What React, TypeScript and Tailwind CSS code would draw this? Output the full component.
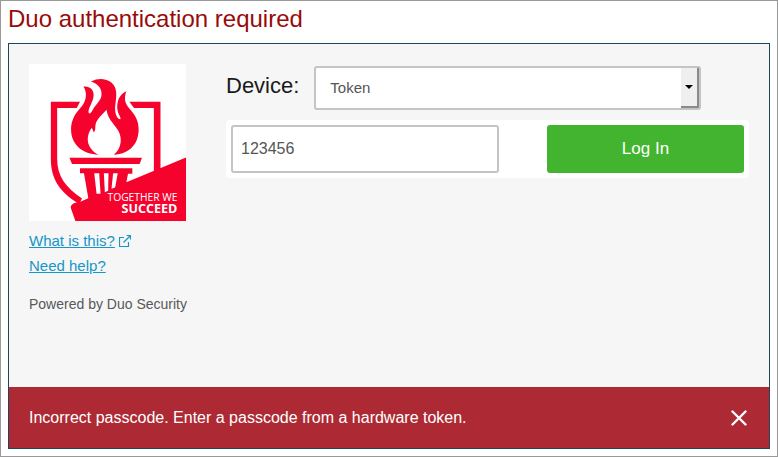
import React, { useState } from 'react';

const TorchLogo: React.FC = () => (
  <svg viewBox="24 27 474 474" className="w-full aspect-square" role="img" aria-label="Together we succeed">
    <rect x="24" y="27" width="474" height="474" fill="#fff" />
    <g fill="#f6032d">
      {/* shield */}
      <path d="M90 141 H178 L168 160 H109 V312 C109 366 134 398 184 433 L176 450 C116 414 90 374 90 314 Z" />
      <path d="M327 141 H421 V345 L401 352 V160 H341 Z" />
      {/* flame */}
      <path d="M188 95 C213 93 223 110 218 130 C214 148 202 162 204 174 C206 180 212 174 217 164 C226 148 242 138 243 120 C244 100 232 87 211 80 C241 64 276 74 285 101 C293 128 279 153 286 178 C289 188 294 194 300 194 C302 188 295 182 292 170 C287 146 294 119 318 109 C310 130 313 145 327 161 C343 179 355 196 355 224 C355 269 327 299 280 301 C298 286 306 262 298 238 C288 211 263 200 258 165 C246 179 228 193 225 210 C223 221 226 227 220 233 C216 229 217 222 213 220 C197 242 193 279 234 301 C187 300 151 271 151 225 C151 197 163 177 179 160 C198 140 201 113 188 95 Z" />
      {/* pedestal */}
      <path d="M146 310 H365 L358 329 H154 Z" />
      <path d="M178 342 H336 V358 H323 L318 384 L498 309 V501 H164 L150 461 C151 449 162 445 177 444 L203 432 L190 357 H178 Z" />
    </g>
    <g fill="#fff">
      <path d="M221 357 H236 L240 419 H228 Z" />
      <path d="M250 357 H264 L263 410 L253 414 Z" />
      <path d="M278 357 H292 L284 400 L273 404 Z" />
      <text x="472" y="441" textAnchor="end" fontSize="31" fontFamily="'Open Sans', sans-serif" fontWeight="400">TOGETHER WE</text>
      <text x="472" y="476" textAnchor="end" fontSize="38" fontFamily="'Open Sans', sans-serif" fontWeight="700">SUCCEED</text>
    </g>
  </svg>
);

const Sidebar: React.FC = () => (
  <aside className="w-[157px] shrink-0">
    <TorchLogo />
    <nav className="mt-[7px] flex flex-col items-start text-[15px] leading-[25px] text-[#1496c8]">
      <a href="#what" className="flex items-center gap-1">
        <span className="underline">What is this?</span>
        <svg className="size-3" viewBox="0 0 12 12" fill="none" stroke="currentColor" strokeWidth="1.2">
          <path d="M5 2.5 H.5 V11.5 H9.5 V7" />
          <path d="M4.5 7.5 L11 1 M7.5 .5 H11.5 V4.5" />
        </svg>
      </a>
      <a href="#help" className="underline">Need help?</a>
    </nav>
    <p className="mt-4 whitespace-nowrap text-[14px] leading-5 text-[#585858]">Powered by Duo Security</p>
  </aside>
);

export default function App() {
  const [passcode, setPasscode] = useState('123456');
  const [showError, setShowError] = useState(true);

  return (
    <div className="flex min-h-screen flex-col border border-[#999] bg-white p-[7px] pt-0 font-['Liberation_Sans',Arial,sans-serif]">
      <h1 className="mb-1.5 text-[24px] leading-9 text-[#990a0a]">Duo authentication required</h1>

      <main className="flex flex-1 flex-col border border-[#1f4558] bg-[#f6f6f6]">
        <div className="flex flex-1 gap-10 p-5">
          <Sidebar />

          <form className="min-w-0 flex-1" onSubmit={(e) => e.preventDefault()}>
            <div className="mr-12 mt-0.5 flex items-center gap-[15px]">
              <label htmlFor="device" className="pb-1 text-[22px] leading-8 text-[#1a1a1a]">Device:</label>
              <div className="relative flex-1">
                <select
                  id="device"
                  className="block h-11 w-full appearance-none rounded-[3px] border-2 border-[#c4c4c4] bg-white px-3.5 text-[15px] text-[#555]"
                >
                  <option>Token</option>
                </select>
                <span className="pointer-events-none absolute inset-y-0.5 right-0.5 flex w-[18px] items-center justify-center border-b-2 border-r-2 border-[#8a8a8a] bg-[#efefef]">
                  <svg className="h-1 w-2" viewBox="0 0 8 4">
                    <path d="M0 0 H8 L4 4 Z" fill="#000" />
                  </svg>
                </span>
              </div>
            </div>

            <div className="mt-2.5 flex justify-between rounded-[4px] bg-white p-[5px]">
              <input
                type="text"
                aria-label="Passcode"
                value={passcode}
                onChange={(e) => setPasscode(e.target.value)}
                className="h-12 w-[268px] rounded-[3px] border-2 border-[#c4c4c4] bg-white px-2 text-[16px] text-[#555]"
              />
              <button type="submit" className="h-12 w-[197px] rounded-[3px] bg-[#43b42f] text-[17px] text-white">
                Log In
              </button>
            </div>
          </form>
        </div>

        {showError && (
          <div role="alert" className="flex h-[61px] items-center justify-between bg-[#ad2a34] px-5 text-[16px] text-white">
            <p>Incorrect passcode. Enter a passcode from a hardware token.</p>
            <button type="button" aria-label="Dismiss" onClick={() => setShowError(false)} className="py-1 pl-1 pr-0.5">
              <svg className="size-4" viewBox="0 0 16 16" stroke="currentColor" strokeWidth="2.4" strokeLinecap="round">
                <path d="M1.5 1.5 L14.5 14.5 M14.5 1.5 L1.5 14.5" />
              </svg>
            </button>
          </div>
        )}
      </main>
    </div>
  );
}
